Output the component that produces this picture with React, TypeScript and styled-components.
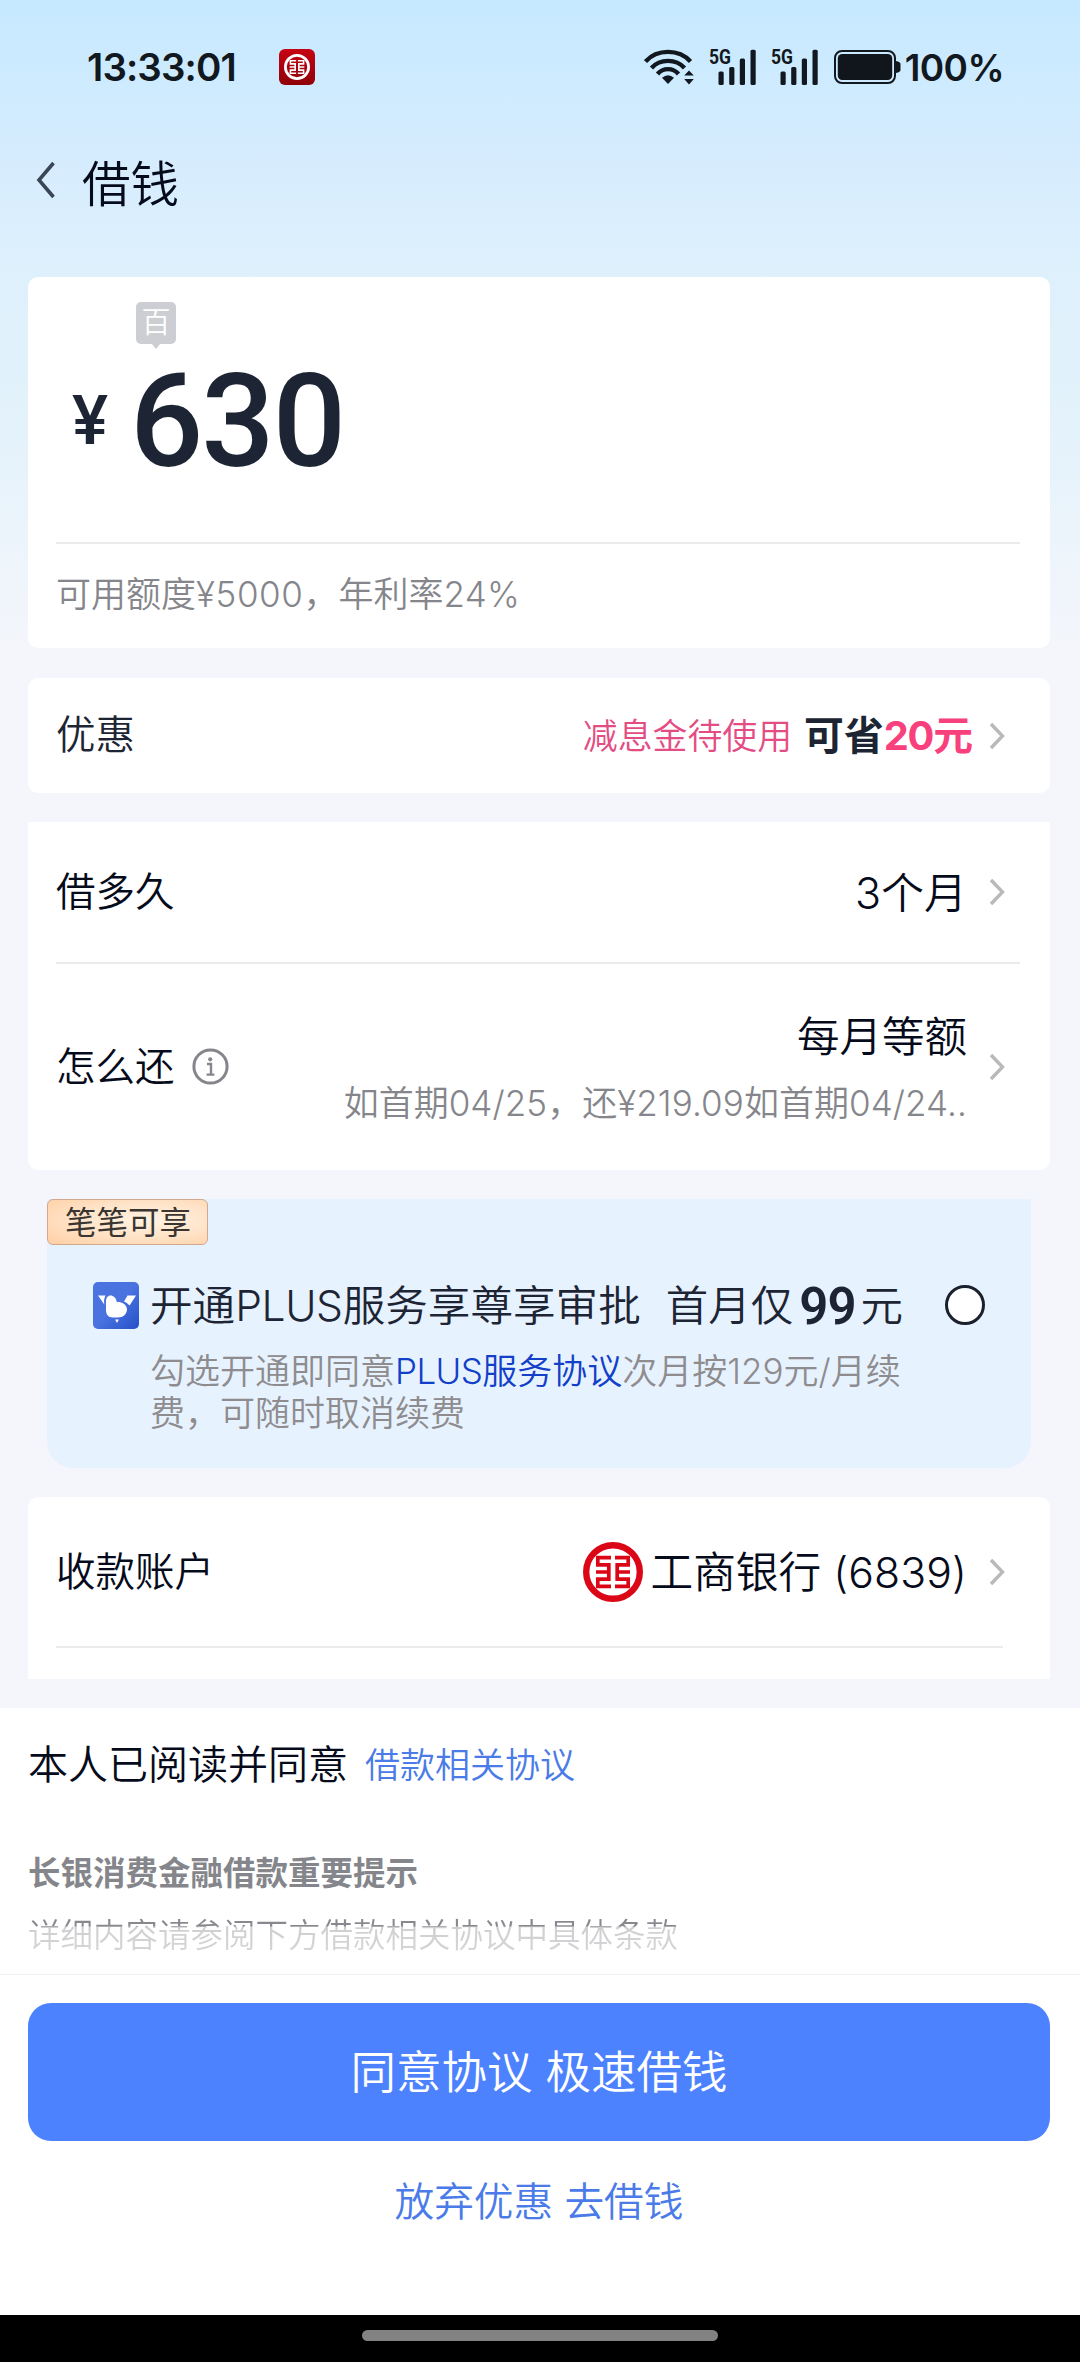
import React from 'react';
import styled, { createGlobalStyle } from 'styled-components';

const INK = '#060b1c';
const NAVY = '#1d2534';
const GREY = '#85868b';

const GlobalStyle = createGlobalStyle`
  * { box-sizing: border-box; }
  body {
    margin: 0;
    background: #f5f6fb;
    font-family: Inter, "Noto Sans CJK SC", sans-serif;
    -webkit-font-smoothing: antialiased;
  }
`;

const Screen = styled.div`
  width: 1080px;
  height: 2362px;
  overflow: hidden;
  display: flex;
  flex-direction: column;
  background: linear-gradient(#c6e9ff 0, #d5ecfe 150px, #def0fc 270px, #e3f2fb 420px, #f5f6fb 660px);
`;

interface TextProps {
  $size: number;
  $color?: string;
  $weight?: number;
  $spacing?: number;
  $line?: number;
  $drop?: number;
}

const Text = styled.span<TextProps>`
  display: block;
  white-space: pre;
  padding-top: ${(p) => p.$drop ?? 0}px;
  font-size: ${(p) => p.$size}px;
  line-height: ${(p) => (p.$line ? `${p.$line}px` : '1.2')};
  color: ${(p) => p.$color ?? INK};
  font-weight: ${(p) => p.$weight ?? 350};
  letter-spacing: ${(p) => p.$spacing ?? 0}px;
`;

const Num = styled.span<{ $spacing?: number }>`
  letter-spacing: ${(p) => p.$spacing ?? 0}px;
`;

const Price = styled.span`
  margin: 0 5px 0 6px;
  font-family: Roboto, sans-serif;
  font-size: 51px;
  font-weight: 600;
  line-height: 40px;
  letter-spacing: -1px;
  vertical-align: -3px;
`;

const StatusBar = styled.header`
  height: 134px;
  padding: 0 76px 0 87px;
  display: flex;
  align-items: center;
  justify-content: space-between;
`;

const StatusGroup = styled.div<{ $gap: number }>`
  display: flex;
  align-items: center;
  gap: ${(p) => p.$gap}px;
`;

const TitleBar = styled.div`
  height: 143px;
  padding: 0 0 51px 36px;
  display: flex;
  align-items: center;
  gap: 26px;
`;

const Cards = styled.main`
  display: flex;
  flex-direction: column;
  padding: 0 30px 0 28px;
  height: 1431px;
`;

const Card = styled.section<{ $height: number; $gap: number; $radius: string }>`
  height: ${(p) => p.$height}px;
  margin-bottom: ${(p) => p.$gap}px;
  border-radius: ${(p) => p.$radius};
  background: #fff;
  padding: 0 30px 0 28px;
  display: flex;
  flex-direction: column;
`;

const Row = styled.div<{ $height: number }>`
  height: ${(p) => p.$height}px;
  flex: none;
  display: flex;
  align-items: center;
  justify-content: space-between;
  padding-right: 15px;
`;

const Inline = styled.div<{ $gap: number }>`
  display: flex;
  align-items: center;
  gap: ${(p) => p.$gap}px;
`;

const Divider = styled.div<{ $inset?: number; $thick?: number }>`
  flex: none;
  height: ${(p) => p.$thick ?? 2}px;
  margin-right: ${(p) => p.$inset ?? 0}px;
  background: #ebebee;
`;

const AmountArea = styled.div`
  height: 265px;
  padding: 25px 0 0 16px;
  display: flex;
  flex-direction: column;
`;

const UnitTag = styled.div`
  width: 40px;
  height: 42px;
  margin-left: 64px;
  border-radius: 5px;
  background: #cdced3;
  color: #fff;
  font-size: 29px;
  font-weight: 350;
  line-height: 42px;
  text-align: center;
  position: relative;
  &::after {
    content: '';
    position: absolute;
    left: 15px;
    top: 41px;
    border: 5px solid transparent;
    border-top: 6px solid #cdced3;
    border-bottom: 0;
  }
`;

const AmountLine = styled.div`
  display: flex;
  align-items: center;
  height: 156px;
  font-family: Roboto, sans-serif;
  font-weight: 500;
  color: ${NAVY};
`;

const Yen = styled.span`
  width: 58px;
  padding-bottom: 3px;
  font-size: 68px;
  line-height: 150px;
`;

const Amount = styled.span`
  font-size: 129px;
  line-height: 156px;
  letter-spacing: -2px;
`;

const Repay = styled.div`
  display: flex;
  flex-direction: column;
  align-items: flex-end;
`;

const PlusCard = styled.section`
  position: relative;
  height: 269px;
  margin: 0 19px 29px 19px;
  padding: 81px 46px 0;
  border-radius: 0 0 26px 26px;
  background: #e7f2ff;
`;

const Ribbon = styled.div`
  position: absolute;
  left: 0;
  top: 0;
  width: 161px;
  height: 46px;
  border: 1px solid #d3a88e;
  border-radius: 6px;
  background: radial-gradient(ellipse at 62% 45%, #fff3e2 0, #ffe3c8 50%, #ffcfa3 100%);
  padding-left: 17px;
`;

const PlusHead = styled.div`
  display: flex;
  align-items: center;
  height: 50px;
`;

const PlusTitle = styled.div`
  margin-left: 11px;
  flex: 1;
  display: flex;
  align-items: center;
  gap: 25px;
`;

const Radio = styled.button`
  width: 40px;
  height: 40px;
  padding: 0;
  border: 3px solid #1b212c;
  border-radius: 50%;
  background: #fff;
`;

const PlusNote = styled.p`
  margin: 21px 0 0 57px;
  color: #8e8c8e;
  font-size: 35px;
  font-weight: 350;
  line-height: 41.5px;
  white-space: pre;
`;

const Link = styled.span`
  color: #1240c8;
`;

const Saving = styled.span`
  color: #f8417c;
`;

const Agreement = styled.section`
  height: 267px;
  background: #fff;
  padding: 32px 28px 0;
  border-bottom: 1px solid #f3f3f5;
`;

const Notice = styled.div`
  margin-top: 41px;
`;

const FadedLine = styled.div`
  & > span {
    width: max-content;
    color: transparent;
    background: linear-gradient(#88898e 0, #88898e 9px, #cfcfd2 10px, #d6d6d8 100%);
    background-clip: text;
    -webkit-background-clip: text;
  }
`;

const Footer = styled.footer`
  height: 340px;
  background: #fff;
  padding: 28px 30px 0 28px;
  display: flex;
  flex-direction: column;
  align-items: center;
`;

const Primary = styled.button`
  width: 100%;
  height: 138px;
  border: 0;
  padding: 0;
  border-radius: 23px;
  background: #4d82ff;
  font-family: inherit;
  display: flex;
  align-items: center;
  justify-content: center;
`;

const Secondary = styled.button`
  margin-top: 38px;
  padding: 0;
  border: 0;
  background: none;
  font-family: inherit;
`;

const NavBar = styled.nav`
  height: 47px;
  background: #000;
  display: flex;
  justify-content: center;
  padding-top: 15px;
`;

const Pill = styled.div`
  width: 356px;
  height: 11px;
  border-radius: 5.5px;
  background: #828282;
`;

const Chevron = () => (
  <svg width="16" height="28" viewBox="0 0 16 28" fill="none">
    <path d="M2 2 L13.5 14 L2 26" stroke="#b9b9bc" strokeWidth="3.4" />
  </svg>
);

const BankLogo = ({ size, color }: { size: number; color: string }) => (
  <svg width={size} height={size} viewBox="0 0 60 60" fill="none" stroke={color}>
    <circle cx="30" cy="30" r="26.8" strokeWidth="6.4" />
    <g strokeWidth="3.7">
      <path d="M28 15.6 H14.8 V22.8 H25.8 V37.2 H14.8 V44.4 H28 M13 30 H25.8" />
      <path d="M32 15.6 H45.2 V22.8 H34.2 V37.2 H45.2 V44.4 H32 M47 30 H34.2" />
    </g>
  </svg>
);

const BankBadge = styled.div`
  width: 36px;
  height: 36px;
  border-radius: 6px;
  background: linear-gradient(#c70413, #8f0009);
  display: flex;
  align-items: center;
  justify-content: center;
`;

const Wifi = () => (
  <svg width="50" height="36" viewBox="0 0 50 36">
    <g fill="none" stroke="#111820" strokeWidth="4.4">
      <path d="M1.5 12.5 C13 -0.3 35 -0.3 46.5 12.5" />
      <path d="M7.5 19 C16 9.5 32 9.5 40.5 19" />
      <path d="M13.5 25 C19 18.5 29 18.5 34.5 25" />
    </g>
    <path d="M24 35 L18 28.8 Q24 23.8 30 28.8 Z" fill="#111820" />
    <path d="M45 21.5 L49.8 26.5 H40.2 Z M45 35.5 L49.8 30 H40.2 Z" fill="#111820" />
  </svg>
);

const Signal = () => (
  <svg width="48" height="52" viewBox="0 -8 48 52" fill="#111820">
    <text x="0" y="15.4" fontFamily="Roboto, sans-serif" fontWeight="700" fontSize="21" textLength="22" lengthAdjust="spacingAndGlyphs">5G</text>
    <rect x="9.5" y="22.5" width="5.2" height="13.5" rx="1.5" />
    <rect x="20.2" y="18" width="5.2" height="18" rx="1.5" />
    <rect x="30.8" y="9.5" width="5.2" height="26.5" rx="1.5" />
    <rect x="41.5" y="0.8" width="5.2" height="35.2" rx="1.5" />
  </svg>
);

const Battery = () => (
  <svg width="67" height="34" viewBox="0 0 67 34">
    <rect x="1" y="1" width="60" height="32" rx="7" fill="none" stroke="#111820" strokeWidth="2" />
    <rect x="3.8" y="4" width="54.4" height="26" rx="4.5" fill="#10161b" />
    <path d="M62 11 Q66.5 12 66.5 14 V20 Q66.5 22 62 23 Z" fill="#10161b" />
  </svg>
);

const BackArrow = () => (
  <svg width="20" height="38" viewBox="0 0 20 38" fill="none">
    <path d="M17.5 2 L3 19 L17.5 36" stroke="#3a4656" strokeWidth="3.6" />
  </svg>
);

const InfoIcon = () => (
  <svg width="37" height="37" viewBox="0 0 37 37">
    <circle cx="18.5" cy="18.5" r="16.6" fill="none" stroke="#85868b" strokeWidth="3" />
    <circle cx="18.2" cy="11.3" r="2.1" fill="#85868b" />
    <path d="M15 16 H19 V26 M14.6 26.6 H22.4" fill="none" stroke="#85868b" strokeWidth="2.4" />
  </svg>
);

const BirdIcon = () => (
  <svg width="46" height="47" viewBox="0 0 46 47">
    <defs>
      <linearGradient id="sky" x1="0" y1="0" x2="1" y2="1">
        <stop offset="0" stopColor="#4a74de" />
        <stop offset="0.5" stopColor="#4a72e0" />
        <stop offset="1" stopColor="#2450c8" />
      </linearGradient>
    </defs>
    <rect width="46" height="47" rx="5" fill="url(#sky)" />
    <g fill="#fff">
      <path d="M5 13.5 H12.5 Q10.5 17 11.3 22.5 Z" />
      <path d="M13 20 C12.5 11 22.5 11.5 23.8 20 C28 19.5 33.5 22 34 27 C34 32 30 35.5 25 35.5 H20 C15 35.5 13 32 13 28 Z" />
      <path d="M34.5 13.5 H43 L36.5 23.5 Q34 20.5 31 19.5 Z" />
      <path d="M22 37.5 H26 L24 41 Z" />
    </g>
  </svg>
);

export default function App() {
  return (
    <>
      <GlobalStyle />
      <Screen>
        <StatusBar>
          <StatusGroup $gap={43}>
            <Text $size={38.5} $weight={600} $color="#111820" $spacing={-0.9}>13:33:01</Text>
            <BankBadge><BankLogo size={26} color="#fff" /></BankBadge>
          </StatusGroup>
          <StatusGroup $gap={14.5}>
            <Wifi />
            <Signal />
            <Signal />
            <StatusGroup $gap={4}>
              <Battery />
              <Text $size={37} $weight={560} $color="#111820" $spacing={-0.6} $drop={2}>100%</Text>
            </StatusGroup>
          </StatusGroup>
        </StatusBar>
        <TitleBar>
          <BackArrow />
          <Text $size={48.5} $drop={10}>借钱</Text>
        </TitleBar>

        <Cards>
          <Card $height={371} $gap={30} $radius="10px">
            <AmountArea>
              <UnitTag>百</UnitTag>
              <AmountLine><Yen>¥</Yen><Amount>630</Amount></AmountLine>
            </AmountArea>
            <Divider $thick={1.5} />
            <Row $height={101}>
              <Text $size={35} $color={GREY}>可用额度<Num $spacing={0.6}>¥5000</Num>，年利率<Num $spacing={0.2}>24%</Num></Text>
            </Row>
          </Card>

          <Card $height={115} $gap={29} $radius="10px">
            <Row $height={115}>
              <Text $size={39.5} $color={NAVY}>优惠</Text>
              <Inline $gap={16}>
                <Inline $gap={12}>
                  <Text $size={34.9} $line={40} $color="#e34d83">减息金待使用</Text>
                  <Text $size={39.8} $line={40} $weight={700} $color={NAVY}>
                    可省<Saving><Num $spacing={-1.2}>20</Num>元</Saving>
                  </Text>
                </Inline>
                <Chevron />
              </Inline>
            </Row>
          </Card>

          <Card $height={348} $gap={29} $radius="0 0 10px 10px">
            <Row $height={140}>
              <Text $size={39.5} $drop={2}>借多久</Text>
              <Inline $gap={22}>
                <Text $size={43} $drop={3}><Num>3</Num>个月</Text>
                <Chevron />
              </Inline>
            </Row>
            <Divider />
            <Row $height={206}>
              <Inline $gap={17}>
                <Text $size={39.5} $drop={2}>怎么还</Text>
                <InfoIcon />
              </Inline>
              <Inline $gap={22}>
                <Repay>
                  <Text $size={42.5} $line={66} $drop={5}>每月等额</Text>
                  <Text $size={35} $line={66} $color={GREY}>如首期<Num $spacing={0.1}>04/25</Num>，还<Num $spacing={0.1}>¥219.09</Num>如首期<Num $spacing={0.1}>04/24..</Num></Text>
                </Repay>
                <Chevron />
              </Inline>
            </Row>
          </Card>

          <PlusCard>
            <Ribbon><Text $size={31.5} $line={45} $weight={400} $color="#3b3532">笔笔可享</Text></Ribbon>
            <PlusHead>
              <BirdIcon />
              <PlusTitle>
                <Text $size={42.6} $line={50} $color={NAVY} $drop={2}>开通<Num $spacing={-0.4}>PLUS</Num>服务享尊享审批</Text>
                <Text $size={42.5} $line={50} $color={NAVY} $drop={2}>首月仅<Price>99</Price>元</Text>
              </PlusTitle>
              <Radio />
            </PlusHead>
            <PlusNote>
              勾选开通即同意<Link><Num $spacing={-0.6}>PLUS</Num>服务协议</Link>次月按<Num>129</Num>元/月续{'\n'}费，可随时取消续费
            </PlusNote>
          </PlusCard>

          <Card $height={182} $gap={0} $radius="10px 10px 0 0">
            <Row $height={149}>
              <Text $size={39.5} $drop={2}>收款账户</Text>
              <Inline $gap={22}>
                <Inline $gap={8}>
                  <BankLogo size={60} color="#dc0716" />
                  <Text $size={42.7} $drop={3}>工商银行<Num $spacing={0.1}> (6839)</Num></Text>
                </Inline>
                <Chevron />
              </Inline>
            </Row>
            <Divider $inset={17} />
          </Card>
        </Cards>

        <Agreement>
          <Inline $gap={17}>
            <Text $size={40} $line={50}>本人已阅读并同意</Text>
            <Text $size={35} $line={50} $color="#4a7be8">借款相关协议</Text>
          </Inline>
          <Notice>
            <Text $size={32.5} $line={86} $weight={700} $color={GREY}>长银消费金融借款重要提示</Text>
            <FadedLine>
              <Text $size={32.5} $line={38}>详细内容请参阅下方借款相关协议中具体条款</Text>
            </FadedLine>
          </Notice>
        </Agreement>
        <Footer>
          <Primary><Text $size={45.5} $color="#fff" $drop={3}>同意协议 极速借钱</Text></Primary>
          <Secondary><Text $size={39.7} $color="#4a7be8">放弃优惠 去借钱</Text></Secondary>
        </Footer>
        <NavBar><Pill /></NavBar>
      </Screen>
    </>
  );
}
